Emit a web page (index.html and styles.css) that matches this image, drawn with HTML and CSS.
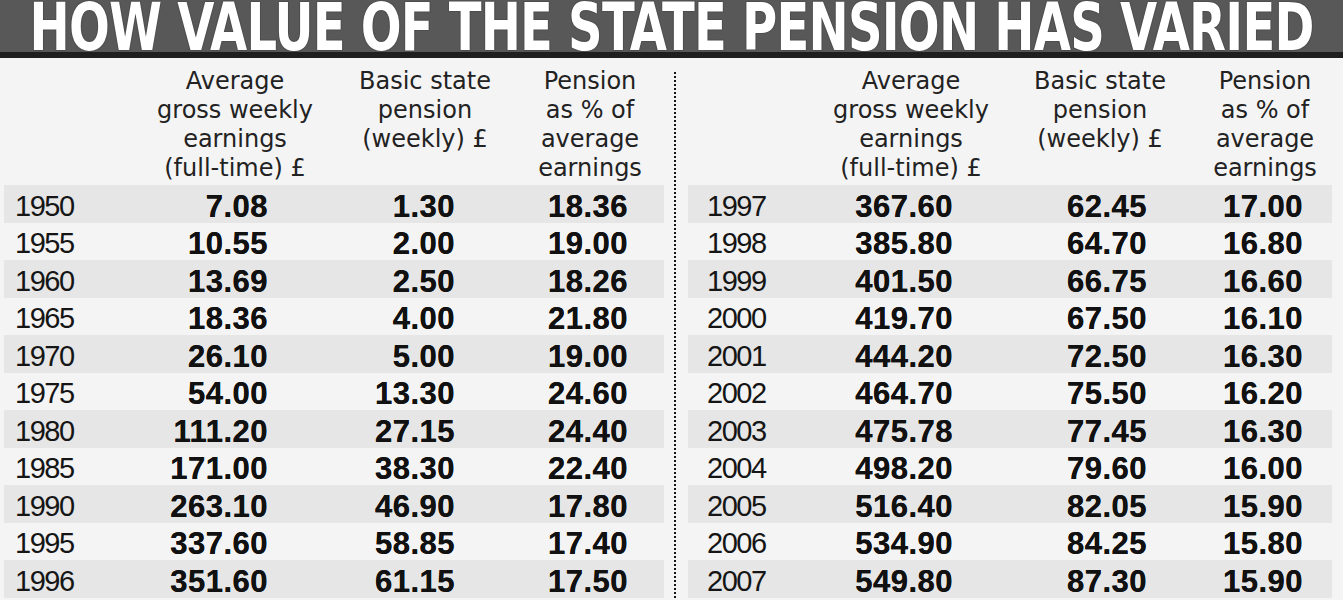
FILE: index.html
```html
<!DOCTYPE html>
<html lang="en">
<head>
<meta charset="utf-8">
<title>How value of the state pension has varied</title>
<link rel="stylesheet" href="styles.css">
</head>
<body>
<header class="title-bar">
  <h1 class="title">HOW VALUE OF THE STATE PENSION HAS VARIED</h1>
</header>
<main class="tables">
  <section class="panel panel--left">
    <div class="head">
      <div class="hcell"></div>
      <div class="hcell">Average<br>gross weekly<br>earnings<br>(full-time) £</div>
      <div class="hcell">Basic state<br>pension<br>(weekly) £</div>
      <div class="hcell">Pension<br>as % of<br>average<br>earnings</div>
    </div>
    <div class="row shade"><div class="year">1950</div><div class="num c1">7.08</div><div class="num c2">1.30</div><div class="num c3">18.36</div></div>
    <div class="row"><div class="year">1955</div><div class="num c1">10.55</div><div class="num c2">2.00</div><div class="num c3">19.00</div></div>
    <div class="row shade"><div class="year">1960</div><div class="num c1">13.69</div><div class="num c2">2.50</div><div class="num c3">18.26</div></div>
    <div class="row"><div class="year">1965</div><div class="num c1">18.36</div><div class="num c2">4.00</div><div class="num c3">21.80</div></div>
    <div class="row shade"><div class="year">1970</div><div class="num c1">26.10</div><div class="num c2">5.00</div><div class="num c3">19.00</div></div>
    <div class="row"><div class="year">1975</div><div class="num c1">54.00</div><div class="num c2">13.30</div><div class="num c3">24.60</div></div>
    <div class="row shade"><div class="year">1980</div><div class="num c1">111.20</div><div class="num c2">27.15</div><div class="num c3">24.40</div></div>
    <div class="row"><div class="year">1985</div><div class="num c1">171.00</div><div class="num c2">38.30</div><div class="num c3">22.40</div></div>
    <div class="row shade"><div class="year">1990</div><div class="num c1">263.10</div><div class="num c2">46.90</div><div class="num c3">17.80</div></div>
    <div class="row"><div class="year">1995</div><div class="num c1">337.60</div><div class="num c2">58.85</div><div class="num c3">17.40</div></div>
    <div class="row shade"><div class="year">1996</div><div class="num c1">351.60</div><div class="num c2">61.15</div><div class="num c3">17.50</div></div>
  </section>
  <div class="divider"></div>
  <section class="panel panel--right">
    <div class="head">
      <div class="hcell"></div>
      <div class="hcell">Average<br>gross weekly<br>earnings<br>(full-time) £</div>
      <div class="hcell">Basic state<br>pension<br>(weekly) £</div>
      <div class="hcell">Pension<br>as % of<br>average<br>earnings</div>
    </div>
    <div class="row shade"><div class="year">1997</div><div class="num c1">367.60</div><div class="num c2">62.45</div><div class="num c3">17.00</div></div>
    <div class="row"><div class="year">1998</div><div class="num c1">385.80</div><div class="num c2">64.70</div><div class="num c3">16.80</div></div>
    <div class="row shade"><div class="year">1999</div><div class="num c1">401.50</div><div class="num c2">66.75</div><div class="num c3">16.60</div></div>
    <div class="row"><div class="year">2000</div><div class="num c1">419.70</div><div class="num c2">67.50</div><div class="num c3">16.10</div></div>
    <div class="row shade"><div class="year">2001</div><div class="num c1">444.20</div><div class="num c2">72.50</div><div class="num c3">16.30</div></div>
    <div class="row"><div class="year">2002</div><div class="num c1">464.70</div><div class="num c2">75.50</div><div class="num c3">16.20</div></div>
    <div class="row shade"><div class="year">2003</div><div class="num c1">475.78</div><div class="num c2">77.45</div><div class="num c3">16.30</div></div>
    <div class="row"><div class="year">2004</div><div class="num c1">498.20</div><div class="num c2">79.60</div><div class="num c3">16.00</div></div>
    <div class="row shade"><div class="year">2005</div><div class="num c1">516.40</div><div class="num c2">82.05</div><div class="num c3">15.90</div></div>
    <div class="row"><div class="year">2006</div><div class="num c1">534.90</div><div class="num c2">84.25</div><div class="num c3">15.80</div></div>
    <div class="row shade"><div class="year">2007</div><div class="num c1">549.80</div><div class="num c2">87.30</div><div class="num c3">15.90</div></div>
  </section>
</main>
</body>
</html>
```

FILE: styles.css
```css
html, body {
  margin: 0;
  padding: 0;
}
body {
  background: #f4f4f4;
  color: #151515;
  width: 1343px;
  height: 600px;
  overflow: hidden;
  font-family: "Liberation Sans", Arial, sans-serif;
}

/* Title bar */
.title-bar {
  height: 52px;
  background: #585858;
  border-bottom: 6px solid #1f1f1f;
  display: flex;
  justify-content: center;
  align-items: flex-start;
  overflow: visible;
}
.title {
  margin: -5px 0 0 0;
  flex: none;
  white-space: nowrap;
  font-family: "DejaVu Sans Condensed", "DejaVu Sans", sans-serif;
  font-stretch: condensed;
  font-weight: bold;
  font-size: 66px;
  line-height: 66px;
  letter-spacing: -1px;
  color: #ffffff;
  text-shadow: 0 0 1px #222, 0 0 1px #222;
  transform: scaleX(0.81);
  transform-origin: center center;
}

/* Tables */
.tables {
  display: flex;
  padding-left: 4px;
}
.panel {
  padding-top: 9px;
}
.panel--left {
  width: 660px;
  --cols: 146px 170px 210px 120px 1fr;
  --year-pad: 11px;
  --pr1: 52px;
  --pr2: 75px;
  --pr3: 22px;
}
.panel--right {
  width: 644px;
  --cols: 143px 160px 218px 112px 1fr;
  --year-pad: 19px;
  --pr1: 38px;
  --pr2: 62px;
  --pr3: 18px;
}
.divider {
  width: 0;
  border-left: 2px dotted #151515;
  margin: 14px 12px 0 10px;
  align-self: stretch;
}

.head {
  display: grid;
  grid-template-columns: var(--cols);
  height: 116px;
  margin-bottom: 2px;
}
.hcell {
  font-family: "DejaVu Sans", "Liberation Sans", sans-serif;
  font-size: 24px;
  line-height: 29px;
  text-align: center;
  white-space: nowrap;
  color: #222;
}

.row {
  display: grid;
  grid-template-columns: var(--cols);
  height: 37.5px;
  align-items: center;
}
.shade {
  background: #e6e6e6;
}
.year {
  padding-left: var(--year-pad);
  padding-top: 5px;
  font-size: 29px;
  line-height: 1;
  letter-spacing: -1.5px;
  color: #151515;
}
.num {
  text-align: right;
  padding-top: 5px;
  font-weight: bold;
  font-size: 31px;
  line-height: 1;
  letter-spacing: 0.5px;
  color: #111;
  text-shadow: 0 0 0.6px #111;
}
.c1 { padding-right: var(--pr1); }
.c2 { padding-right: var(--pr2); }
.c3 { padding-right: var(--pr3); }
```
